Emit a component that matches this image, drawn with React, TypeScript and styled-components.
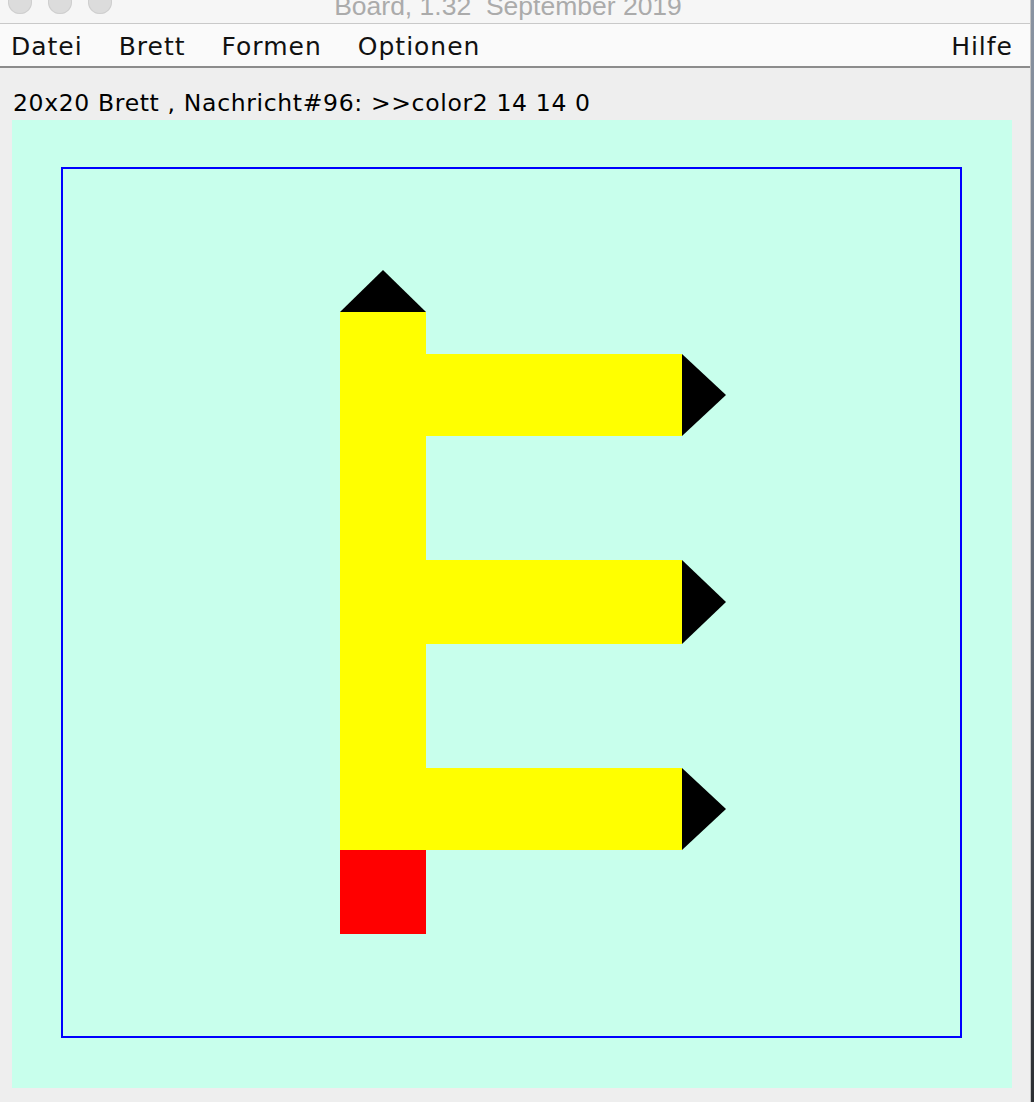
import React from "react";
import styled, { createGlobalStyle } from "styled-components";

const Global = createGlobalStyle`
  html, body { margin: 0; padding: 0; background: #eeeeee; }
  body { width: 1034px; height: 1102px; overflow: hidden; }
`;

const Screen = styled.div`
  display: flex;
  width: 1034px;
  height: 1102px;
`;

const Window = styled.div`
  display: flex;
  flex-direction: column;
  width: 1030px;
  height: 1102px;
  background: #eeeeee;
`;

const EdgeLight = styled.div`
  width: 1px;
  background: #c4c4c4;
`;

const EdgeDark = styled.div`
  flex: 1;
  background: linear-gradient(#8a94a2, #5c6470 60%, #2c2f33);
`;

const TitleBar = styled.div`
  display: grid;
  grid-template-columns: 1fr auto 1fr;
  height: 23px;
  background: #f6f6f6;
  border-bottom: 1px solid #c9c9c9;
  overflow: hidden;
`;

const Lights = styled.div`
  display: flex;
  gap: 16px;
  padding-left: 8px;
  margin-top: -10px;
  align-items: flex-start;
`;

const Light = styled.span`
  width: 24px;
  height: 24px;
  border-radius: 50%;
  background: #dcdcdc;
  box-shadow: inset 0 0 0 1px #cfcfcf;
`;

const Title = styled.div`
  font-family: "Liberation Sans", Arial, sans-serif;
  font-size: 26.5px;
  line-height: 26px;
  color: #ababab;
  white-space: pre;
  margin-top: -7px;
  padding-right: 14px;
`;

const MenuBar = styled.div`
  display: flex;
  align-items: center;
  height: 42px;
  background: #fafafa;
  border-bottom: 2px solid #8c8c8c;
  padding: 0 17px 0 11px;
  gap: 36px;
`;

const MenuItem = styled.span<{ $push?: boolean }>`
  font-family: "DejaVu Sans", sans-serif;
  font-size: 25px;
  letter-spacing: 1px;
  color: #111111;
  margin-left: ${(p) => (p.$push ? "auto" : "0")};
  padding-top: 2px;
`;

const Content = styled.div`
  display: flex;
  flex-direction: column;
  padding: 0 0 0 12px;
`;

const Status = styled.div`
  font-family: "DejaVu Sans", sans-serif;
  font-size: 23.5px;
  letter-spacing: 0.65px;
  color: #000000;
  height: 52px;
  line-height: 28px;
  padding: 21px 0 0 1px;
  box-sizing: border-box;
  white-space: pre;
`;

const Panel = styled.div`
  width: 1000px;
  height: 968px;
  background: #c8ffec;
`;

const BoardSvg = styled.svg`
  display: block;
`;

const Y = "#ffff00";

export default function App() {
  return (
    <>
      <Global />
      <Screen>
        <Window>
          <TitleBar>
            <Lights>
              <Light />
              <Light />
              <Light />
            </Lights>
            <Title>Board, 1.32  September 2019</Title>
            <div />
          </TitleBar>
          <MenuBar>
            <MenuItem>Datei</MenuItem>
            <MenuItem>Brett</MenuItem>
            <MenuItem>Formen</MenuItem>
            <MenuItem>Optionen</MenuItem>
            <MenuItem $push>Hilfe</MenuItem>
          </MenuBar>
          <Content>
            <Status>20x20 Brett , Nachricht#96: &gt;&gt;color2 14 14 0</Status>
            <Panel>
              <BoardSvg width="1000" height="968" viewBox="0 0 1000 968">
                <rect x="50" y="48" width="899" height="869" fill="none" stroke="#0000ff" strokeWidth="2" />
                <rect x="328" y="192" width="86" height="538" fill={Y} />
                <rect x="414" y="234" width="256" height="82" fill={Y} />
                <rect x="414" y="440" width="256" height="84" fill={Y} />
                <rect x="414" y="648" width="256" height="82" fill={Y} />
                <polygon points="328,192 414,192 371,150" fill="#000" />
                <polygon points="670,234 670,316 714,275" fill="#000" />
                <polygon points="670,440 670,524 714,482" fill="#000" />
                <polygon points="670,648 670,730 714,689" fill="#000" />
                <rect x="328" y="730" width="86" height="84" fill="#ff0000" />
              </BoardSvg>
            </Panel>
          </Content>
        </Window>
        <EdgeLight />
        <EdgeDark />
      </Screen>
    </>
  );
}
